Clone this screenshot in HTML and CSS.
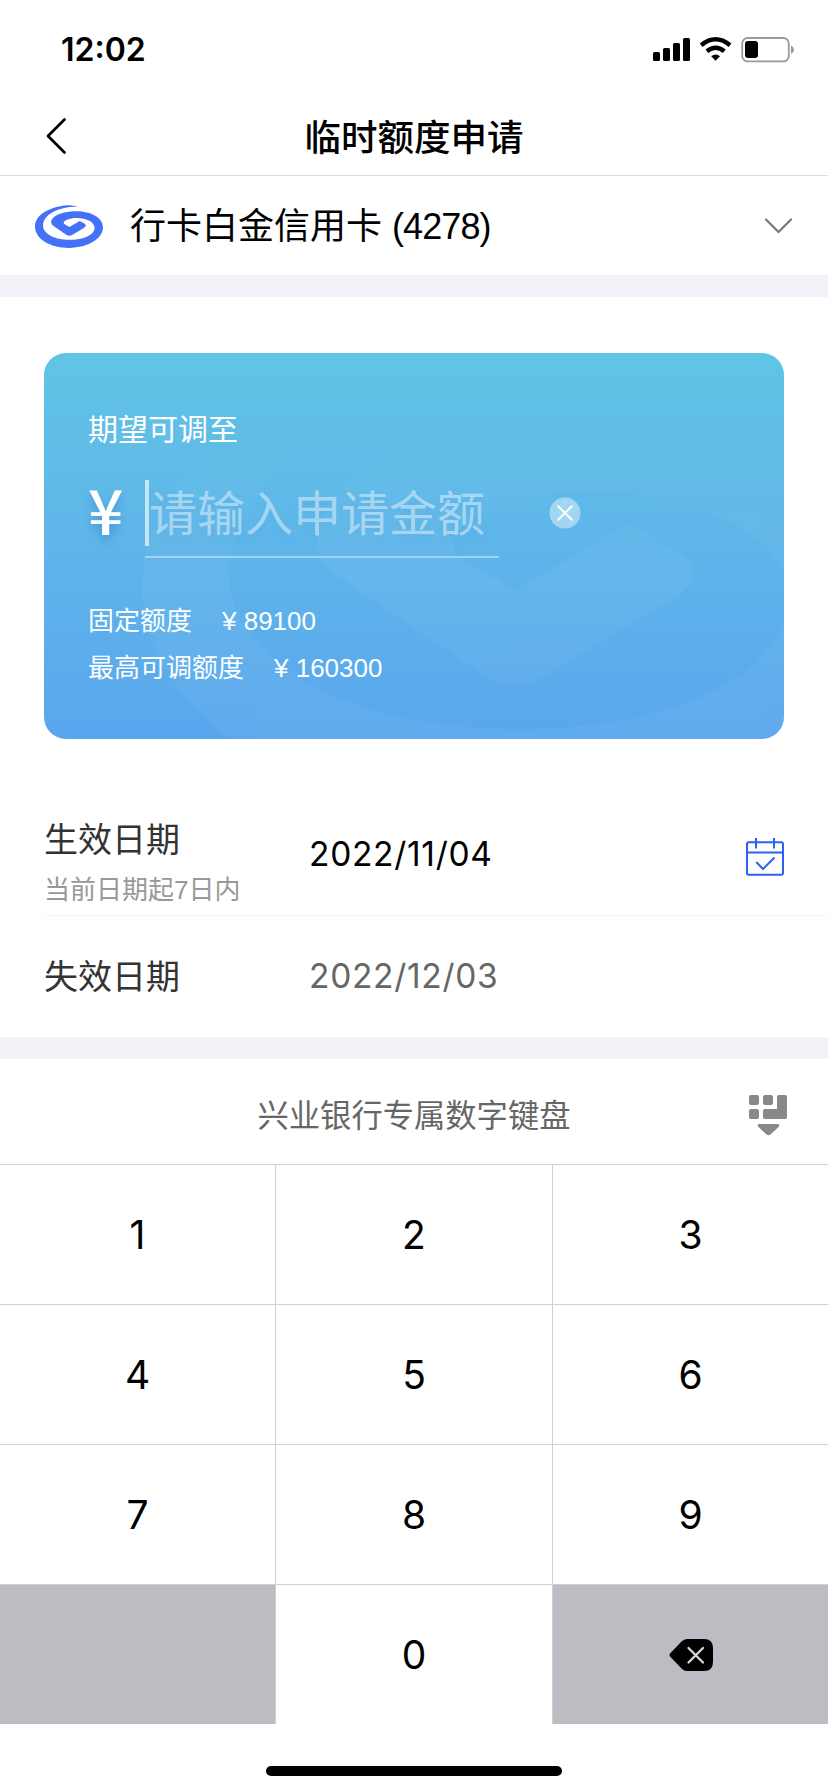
FILE: index.html
```html
<!DOCTYPE html>
<html lang="zh-CN">
<head>
<meta charset="utf-8">
<title>临时额度申请</title>
<link rel="stylesheet" href="styles.css">
</head>
<body>
<svg width="0" height="0" class="defs" aria-hidden="true">
  <symbol id="swirl" viewBox="105 617 202 127">
    <path d="M231 622C218 617 198 616 180 620C136 628 105 651 105 681C105 716 149 744 206 744C263 744 307 716 307 683C307 654 272 635 228 635C184 635 153 650 153 668Q153 674 160 679L199 705.500Q207 710 215 705.500L251 684Q260 678 252 671.500L238 664L207 682L192 673C184 665 204 655 228 655C260 655 282 668 282 684C282 705 250 720 208 720C163 720 129 702 129 678C129 645 176 621 231 622Z"/>
  </symbol>
</svg>
<div class="screen">
  <header class="status">
    <span class="time">12:02</span>
    <svg class="status-icons" width="142" height="26" viewBox="0 0 142 26">
      <rect x="0" y="15" width="7" height="9" rx="1.5"/><rect x="10" y="11" width="7" height="13" rx="1.5"/><rect x="20" y="6" width="7" height="18" rx="1.5"/><rect x="30" y="1" width="7" height="23" rx="1.5"/>
      <g fill="none" stroke="#000" stroke-width="4.4"><path d="M48.2 8.2Q62.6-3.6 77 8.2"/><path d="M53.9 14.3Q62.6 7.2 71.3 14.3"/></g>
      <path d="M58.2 19.2Q62.6 15.6 67 19.2L62.6 23.8Z"/>
      <rect x="89.2" y="1" width="46.6" height="23.4" rx="5.5" fill="none" stroke="#999" stroke-width="1.8"/>
      <rect x="92" y="4" width="13" height="17" rx="3"/>
      <path d="M138 8.5Q141 10 141 12.7Q141 15.500 138 17Z" fill="#999"/>
    </svg>
  </header>
  <nav class="nav">
    <svg class="back" width="22" height="38" viewBox="0 0 22 38"><path d="M19.500 2.500L3 19L19.500 35.500"/></svg>
    <h1>临时额度申请</h1>
  </nav>
  <div class="account">
    <svg class="logo" width="68" height="43"><use href="#swirl"/></svg>
    <span class="account-name">行卡白金信用卡 <span class="tail">(4278)</span></span>
    <svg class="chevron" width="30" height="18" viewBox="0 0 30 18"><path d="M2 2.500L14.500 15L27 2.500"/></svg>
  </div>
  <div class="band"></div>
  <main>
    <section class="card">
      <svg class="watermark" width="738" height="464"><use href="#swirl"/></svg>
      <div class="label">期望可调至</div>
      <div class="amount">
        <span class="yen">¥</span>
        <div class="field"><i class="cursor"></i><span>请输入申请金额</span></div>
        <svg class="clear" width="32" height="32" viewBox="0 0 32 32"><circle cx="16" cy="16" r="15.500" fill="#fff" fill-opacity=".42"/><path d="M9.200 9.200L22.800 22.800M22.800 9.200L9.200 22.800" stroke="#fff" stroke-width="2" stroke-linecap="round"/></svg>
      </div>
      <div class="limit fixed"><span>固定额度</span><span>¥ 89100</span></div>
      <div class="limit"><span>最高可调额度</span><span>¥ 160300</span></div>
    </section>
    <section class="dates">
      <div class="row start">
        <div class="names"><div class="name">生效日期</div><div class="hint">当前日期起7日内</div></div>
        <div class="date">2022/11/04</div>
        <svg class="calendar" width="38" height="38" viewBox="0 0 38 38"><path d="M1 35V6Q1 4.300 2.700 4.300H35.300Q37 4.300 37 6V35Q37 36.700 35.300 36.700H2.700Q1 36.700 1 35ZM1 14.500H37M10 0V10.500M28 0V10.500M10.300 24L17 31L28.500 19.500"/></svg>
      </div>
      <div class="row end">
        <div class="names"><div class="name">失效日期</div></div>
        <div class="date muted">2022/12/03</div>
      </div>
    </section>
  </main>
  <div class="band"></div>
  <div class="kb-head">
    <span>兴业银行专属数字键盘</span>
    <svg class="hide" width="38" height="41" viewBox="0 0 38 41"><rect width="10" height="10" rx="2"/><rect x="14" width="10" height="10" rx="2"/><rect y="14" width="10" height="10" rx="2"/><path d="M30 0H36Q38 0 38 2V22Q38 24 36 24H16Q14 24 14 22V16Q14 14 16 14H28V2Q28 0 30 0ZM10 29H29Q31 29.500 30 31.500L21.500 39.500Q19.500 41 17.500 39.500L9 31.500Q8 29.500 10 29Z"/></svg>
  </div>
  <div class="keys">
    <div class="key">1</div><div class="key">2</div><div class="key">3</div>
    <div class="key">4</div><div class="key">5</div><div class="key">6</div>
    <div class="key">7</div><div class="key">8</div><div class="key">9</div>
    <div class="key grey"></div><div class="key">0</div>
    <div class="key grey"><svg width="44" height="32" viewBox="0 0 44 32"><path d="M18 0H35Q44 0 44 9V23Q44 32 35 32H18Q15 32 12.500 29.500L1.500 18Q-.5 16 1.500 14L12.500 2.500Q15 0 18 0Z"/><path d="M19.500 9L34 23.500M34 9L19.500 23.500" stroke="#d8d8dc" stroke-width="2.300" stroke-linecap="round"/></svg></div>
  </div>
  <footer class="home"><i></i></footer>
</div>
</body>
</html>
```
FILE: styles.css
```css
* { box-sizing: border-box; }
body { margin: 0; background: #fff; color: #000; font-family: "Liberation Sans", "Noto Sans CJK SC", sans-serif; }
svg { display: block; flex: none; }
.defs { position: absolute; }
.screen { width: 828px; height: 1792px; display: flex; flex-direction: column; overflow: hidden; }
.status { height: 96px; padding: 0 33px 0 61px; display: flex; align-items: center; justify-content: space-between; }
.time { font: 600 32px/40px Inter, sans-serif; padding-top: 4px; }
.status-icons { margin-top: 4px; }
.nav { height: 80px; border-bottom: 1px solid #dedede; display: grid; grid-template-columns: 82px 1fr 82px; align-items: center; }
.back { margin-left: 45px; }
.back path { fill: none; stroke: #000; stroke-width: 2.7; stroke-linecap: round; stroke-linejoin: round; }
.nav h1 { margin: 0; text-align: center; font: 500 36.5px/50px "Noto Sans CJK SC", sans-serif; }
.account { height: 99px; padding: 0 34px 0 35px; display: flex; align-items: center; }
.logo { fill: #4471f7; margin-top: 2px; }
.account-name { margin-left: 27px; padding-top: 3px; flex: 1; font-size: 36px; line-height: 50px; }
.tail { letter-spacing: -.9px; }
.chevron path { fill: none; stroke: #777; stroke-width: 2.2; stroke-linecap: round; stroke-linejoin: round; }
.band { height: 22px; background: #f2f3f8; flex: none; }
main { height: 740px; padding: 56px 0 0 44px; }
.card { position: relative; overflow: hidden; width: 740px; height: 386px; padding: 55px 44px 0; border-radius: 22px; color: #fff; background: linear-gradient(#61c4e5, #5fb7e9 45%, #59a6ee); }
.watermark { position: absolute; left: 98px; top: 0; fill: #fff; opacity: .045; mask-image: linear-gradient(transparent 10%, #000 50%); }
.label { font-size: 30px; line-height: 44px; }
.amount { display: flex; align-items: center; height: 80px; margin-top: 26px; }
.yen { width: 57px; padding-bottom: 20px; font: 500 62px/80px "Noto Sans CJK SC", sans-serif; text-shadow: 0 6px 8px rgba(30, 90, 190, .35); }
.field { width: 354px; height: 80px; padding-bottom: 9px; border-bottom: 2px solid rgba(255, 255, 255, .4); display: flex; align-items: center; font: 400 48px/70px "Noto Sans CJK SC", sans-serif; color: rgba(255, 255, 255, .45); white-space: nowrap; text-shadow: 0 6px 8px rgba(30, 90, 190, .06); }
.field span { padding-bottom: 5px; }
.cursor { width: 4px; height: 66px; background: #c6e6f8; }
.clear { margin: 0 0 11px 50px; }
.limit { display: flex; gap: 30px; font-size: 26px; line-height: 36px; }
.fixed { margin: 45px 0 11px; }
.dates { padding-top: 68px; }
.row { display: grid; grid-template-columns: 265px 1fr auto; align-items: center; padding-right: 44px; }
.start { height: 109px; border-bottom: 1px solid #f4f4f7; }
.end { height: 121px; }
.name { font: 34px/48px "Noto Sans CJK SC", sans-serif; color: #333; }
.start .names { padding-top: 5px; }
.end .names { padding-bottom: 4px; }
.hint { margin-top: 5px; font-size: 26px; line-height: 46px; color: #999; }
.date { font: 400 33.5px/48px Inter, sans-serif; letter-spacing: .7px; padding-bottom: 2px; }
.start .date { padding-bottom: 14px; }
.muted { color: #666; }
.calendar { margin-bottom: 8px; }
.calendar path { fill: none; stroke: #2b62f0; stroke-width: 2; }
.kb-head { height: 105px; padding: 4px 41px 0 79px; display: flex; align-items: center; font: 31.300px/46px "Noto Sans CJK SC", sans-serif; color: #666; }
.kb-head span { flex: 1; text-align: center; }
.hide { fill: #888; margin-top: 4px; }
.keys { height: 560px; padding-top: 1px; background: #d0d0d2; display: grid; grid-template: repeat(4, 139px) / 275px 276px 275px; gap: 1px; }
.key { background: #fff; display: flex; align-items: center; justify-content: center; font: 400 39px/48px Inter, sans-serif; }
.grey { background: #bcbdc2; }
.home { height: 68px; display: flex; justify-content: center; padding-top: 42px; }
.home i { width: 296px; height: 10px; border-radius: 5px; background: #000; }
```
